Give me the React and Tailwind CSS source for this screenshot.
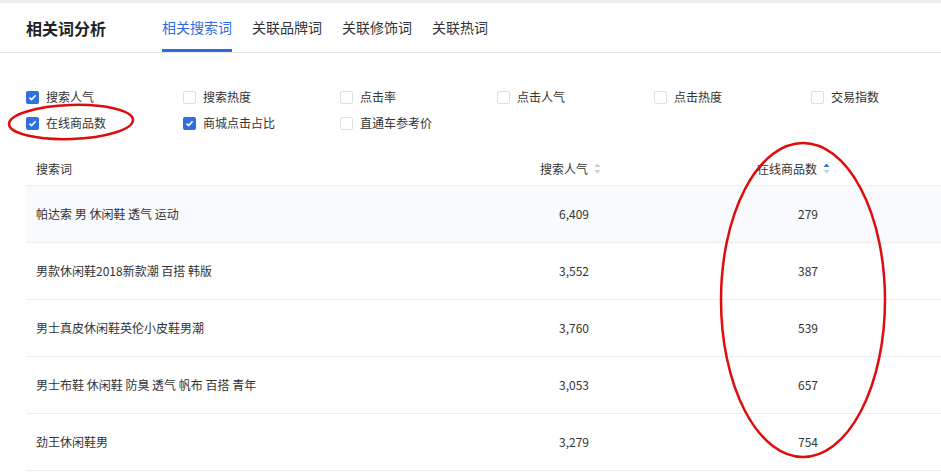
import React from 'react';

const tabs = ['相关搜索词', '关联品牌词', '关联修饰词', '关联热词'];

const options = [
	{ label: '搜索人气', checked: true },
	{ label: '搜索热度', checked: false },
	{ label: '点击率', checked: false },
	{ label: '点击人气', checked: false },
	{ label: '点击热度', checked: false },
	{ label: '交易指数', checked: false },
	{ label: '在线商品数', checked: true },
	{ label: '商城点击占比', checked: true },
	{ label: '直通车参考价', checked: false },
];

const rows = [
	{ word: '帕达索 男 休闲鞋 透气 运动', hot: '6,409', count: '279' },
	{ word: '男款休闲鞋2018新款潮 百搭 韩版', hot: '3,552', count: '387' },
	{ word: '男士真皮休闲鞋英伦小皮鞋男潮', hot: '3,760', count: '539' },
	{ word: '男士布鞋 休闲鞋 防臭 透气 帆布 百搭 青年', hot: '3,053', count: '657' },
	{ word: '劲王休闲鞋男', hot: '3,279', count: '754' },
];

const Checkbox = ({ checked }) =>
	checked ? (
		<span className="flex h-[13px] w-[13px] items-center justify-center rounded-[2px] bg-[#2f6fe0]">
			<svg width="9" height="9" viewBox="0 0 9 9">
				<path d="M1.5 4.6 L3.6 6.6 L7.6 2.2" fill="none" stroke="#fff" strokeWidth="1.6" />
			</svg>
		</span>
	) : (
		<span className="h-[13px] w-[13px] rounded-[2px] border border-[#dcdfe6] bg-white" />
	);

const SortIcon = ({ active }) => (
	<svg width="7" height="11" viewBox="0 0 7 11" className="ml-[6px]">
		<path d="M3.5 0.5 L6.5 4 L0.5 4 Z" fill={active ? '#3b6fd8' : '#c8ccd4'} />
		<path d="M3.5 10.5 L6.5 7 L0.5 7 Z" fill="#c8ccd4" />
	</svg>
);

export default function App() {
	return (
		<div
			className="relative h-[475px] w-[941px] overflow-hidden bg-white text-[#333]"
			style={{ fontFamily: '"Noto Sans CJK SC", "Noto Sans", sans-serif' }}
		>
			<div className="h-[3px] bg-[#ececec]" />
			<div className="flex h-[50px] items-stretch border-b border-[#e6e6e6] pl-[26px]">
				<div className="flex items-center text-[16px] font-bold text-[#222]">相关词分析</div>
				<div className="ml-[56px] flex gap-[20px]">
					{tabs.map((t, i) => (
						<div
							key={t}
							className={
								i === 0
									? 'flex items-center border-b-[3px] border-[#2f6be0] pt-[3px] text-[14px] text-[#2f6be0]'
									: 'flex items-center border-b-[3px] border-transparent pt-[3px] text-[14px] text-[#333]'
							}
						>
							{t}
						</div>
					))}
				</div>
			</div>

			<div className="mt-[31px] grid grid-cols-[repeat(6,157px)] pl-[26px]">
				{options.map((o) => (
					<div key={o.label} className="flex h-[26px] items-center gap-[7px] text-[12px]">
						<Checkbox checked={o.checked} />
						<span>{o.label}</span>
					</div>
				))}
			</div>

			<div className="ml-[26px] mt-[16px] text-[12px]">
				<div className="flex h-[34px] items-center border-b border-[#eeeeee]">
					<div className="w-[394px] pl-[10px]">搜索词</div>
					<div className="flex w-[181px] items-center justify-end">
						搜索人气
						<SortIcon />
					</div>
					<div className="flex w-[229px] items-center justify-end">
						在线商品数
						<SortIcon active />
					</div>
				</div>
				{rows.map((r, i) => (
					<div
						key={r.word}
						className={
							i === 0
								? 'flex h-[57px] items-center border-b border-[#eeeeee] bg-[#f8fafd]'
								: 'flex h-[57px] items-center border-b border-[#eeeeee]'
						}
					>
						<div className="w-[394px] pl-[10px]">{r.word}</div>
						<div className="w-[181px] pr-[12px] text-right">{r.hot}</div>
						<div className="w-[229px] pr-[12px] text-right">{r.count}</div>
					</div>
				))}
			</div>

			<svg className="pointer-events-none absolute left-0 top-0" width="941" height="475">
				<ellipse cx="71" cy="122" rx="62" ry="17" fill="none" stroke="#e00b0b" strokeWidth="2.5" transform="rotate(-2 71 122)" />
				<ellipse cx="803" cy="300" rx="82" ry="157" fill="none" stroke="#e00b0b" strokeWidth="2.5" />
			</svg>
		</div>
	);
}
